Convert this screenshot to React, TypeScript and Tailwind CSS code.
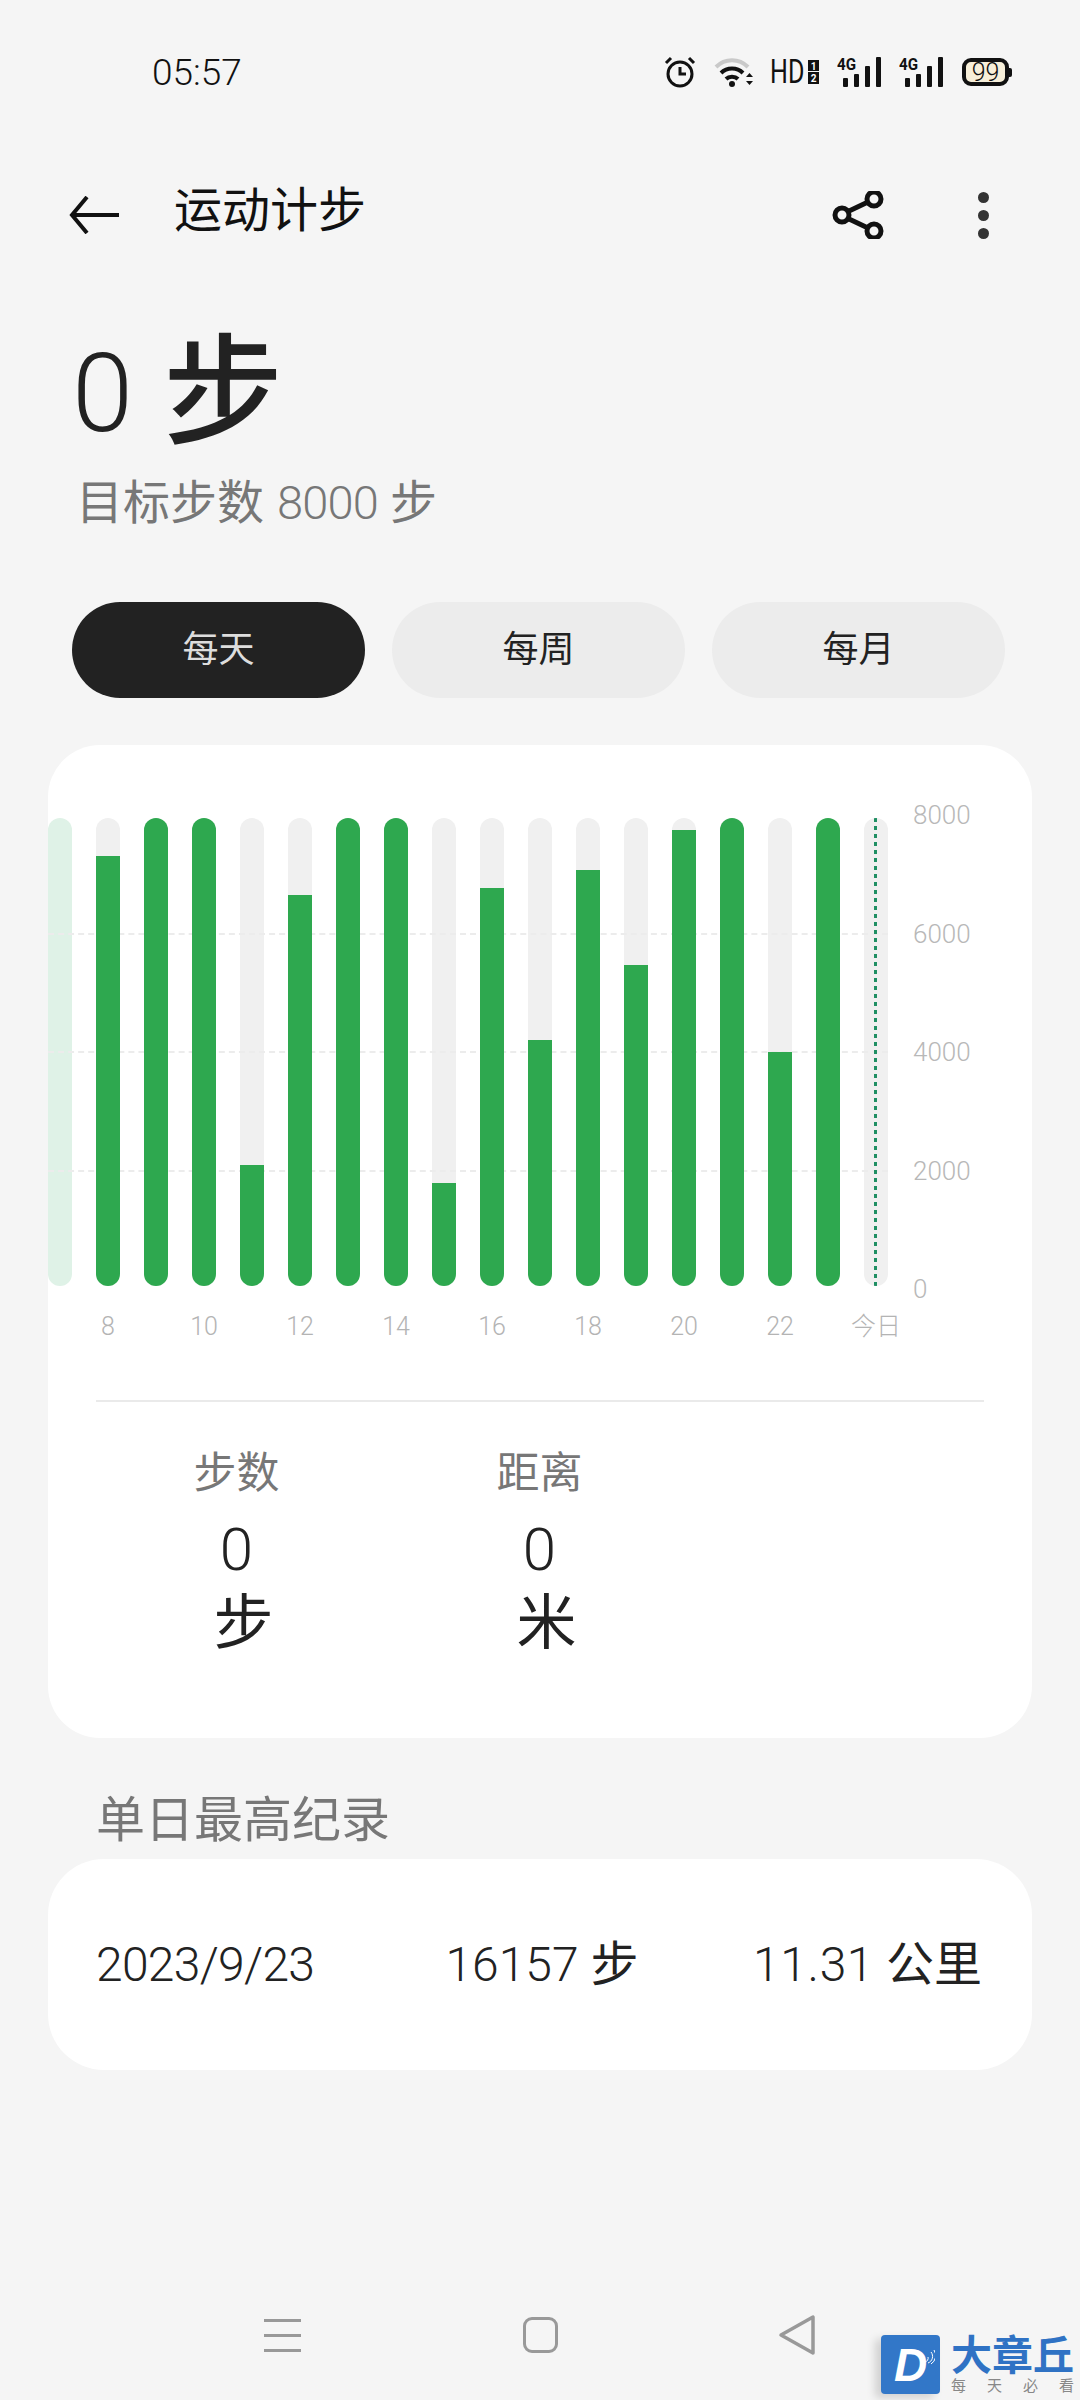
import React from 'react';

// top of the green fill in px from the track top, null = full bar
const bars: { fill: number | null; label?: string; light?: boolean; today?: boolean }[] = [
  { fill: null, light: true },
  { fill: 38, label: '8' },
  { fill: null },
  { fill: null, label: '10' },
  { fill: 347 },
  { fill: 77, label: '12' },
  { fill: null },
  { fill: null, label: '14' },
  { fill: 365 },
  { fill: 70, label: '16' },
  { fill: 222 },
  { fill: 52, label: '18' },
  { fill: 147 },
  { fill: 12, label: '20' },
  { fill: null },
  { fill: 234, label: '22' },
  { fill: null },
  { fill: 468, label: '今日', today: true },
];

const gridLines = ['top-[115px]', 'top-[233px]', 'top-[352px]'];
const yLabels = ['8000', '6000', '4000', '2000', '0'];

const SignalIcon = () => (
  <svg width="46" height="30" viewBox="0 0 46 30">
    <text transform="translate(0 13) scale(0.95 1)" fontSize="16" fontWeight="700" fontFamily="Roboto, sans-serif" fill="#111">4G</text>
    <rect x="6" y="21" width="5" height="9" rx="1" fill="#111" />
    <rect x="17" y="17" width="5" height="13" rx="1" fill="#111" />
    <rect x="28" y="9" width="5" height="21" rx="1" fill="#111" />
    <rect x="39" y="0" width="5" height="30" rx="1" fill="#111" />
  </svg>
);

const StatusBar = () => (
  <div className="h-[144px] flex items-center pl-[152px] pr-[68px] shrink-0">
    <span className="text-[37px] font-light text-[#111] leading-none">05:57</span>
    <div className="ml-auto flex items-center">
      <svg width="32" height="32" viewBox="0 0 32 32" fill="none" stroke="#111">
        <circle cx="16" cy="18" r="12" strokeWidth="3" />
        <path d="M16 11v7h6" strokeWidth="3" />
        <path d="M2 7l5-5M30 7l-5-5" strokeWidth="3" />
      </svg>
      <svg width="40" height="32" viewBox="0 0 40 32" fill="none" className="ml-[18px]">
        <path d="M2 11C11 2 25 2 34 11" stroke="#c9c9c9" strokeWidth="4" />
        <path d="M7 17C13 11 23 11 29 17" stroke="#111" strokeWidth="4" />
        <path d="M12 23C15 20 21 20 24 23" stroke="#111" strokeWidth="4" />
        <circle cx="18" cy="28" r="3" fill="#111" />
        <path d="M32 21l3.5-4 3.5 4zM32 25l3.5 4 3.5-4z" fill="#111" />
      </svg>
      <svg width="50" height="40" viewBox="0 -5 50 40" className="ml-[16px] -my-[5px]">
        <text transform="translate(0 26) scale(0.76 1)" fontSize="33" fontFamily="Roboto, sans-serif" fill="#111">HD</text>
        <rect x="38" y="3" width="11" height="11" fill="#111" />
        <rect x="38" y="15" width="11" height="12" fill="#111" />
        <text x="43.5" y="12.5" fontSize="10" fontWeight="700" textAnchor="middle" fontFamily="Roboto, sans-serif" fill="#fff">1</text>
        <text x="43.5" y="25" fontSize="10" fontWeight="700" textAnchor="middle" fontFamily="Roboto, sans-serif" fill="#fff">2</text>
      </svg>
      <div className="ml-[17px]"><SignalIcon /></div>
      <div className="ml-[16px]"><SignalIcon /></div>
      <div className="ml-[17px] flex items-center">
        <div className="w-[47px] h-[28px] rounded-[9px] border-[4px] border-[#111] bg-[#f7efd9] flex items-center justify-center text-[25px] font-light text-[#111] leading-none">
          99
        </div>
        <div className="w-[3px] h-[9px] rounded-r-[2px] bg-[#111]" />
      </div>
    </div>
  </div>
);

const Toolbar = () => (
  <div className="h-[142px] flex items-center pl-[69px] pr-[91px] shrink-0">
    <svg width="50" height="38" viewBox="0 0 50 38" fill="none" stroke="#111" strokeWidth="4">
      <path d="M50 19H3" />
      <path d="M18 1L3 19l15 18" />
    </svg>
    <span className="ml-[55px] mb-[8px] text-[48px] leading-none text-[#111]">运动计步</span>
    <svg width="52" height="48" viewBox="0 0 52 48" fill="none" stroke="#111" strokeWidth="5" className="ml-auto mr-[94px]">
      <circle cx="10" cy="24" r="7" />
      <circle cx="42" cy="8" r="7" />
      <circle cx="42" cy="40" r="7" />
      <path d="M16 20.5L36 11M16 27.5L36 37" />
    </svg>
    <div className="flex flex-col gap-[7px]">
      <div className="w-[11px] h-[11px] rounded-full bg-[#333]" />
      <div className="w-[11px] h-[11px] rounded-full bg-[#333]" />
      <div className="w-[11px] h-[11px] rounded-full bg-[#333]" />
    </div>
  </div>
);

const Chart = () => (
  <div className="flex items-start">
    <div className="relative flex gap-[24px] mt-[73px]">
      {gridLines.map((top) => (
        <div key={top} className={`absolute left-0 right-0 ${top} border-t-2 border-dashed border-[#ececec] z-[5]`} />
      ))}
      {bars.map((bar, i) => (
        <div key={i} className="w-[24px]">
          <div
            className={`relative h-[468px] rounded-full overflow-hidden flex flex-col justify-end ${
              bar.light ? 'bg-[#dff2e7]' : 'bg-[#f0f0f0]'
            }`}
          >
            {!bar.light && !bar.today && (
              <div className="relative z-10 bg-[#2ea84f]" style={{ height: 468 - (bar.fill ?? 0) }} />
            )}
            {bar.today && (
              <div className="absolute z-10 top-0 bottom-0 left-[10px] w-[3px] bg-[repeating-linear-gradient(to_bottom,#1f8f63_0,#1f8f63_4px,transparent_4px,transparent_8px)]" />
            )}
          </div>
          <div className="h-[26px] mt-[28px] flex justify-center">
            {bar.label && (
              <span className="whitespace-nowrap text-[25px] leading-[26px] font-light text-[#b4b4b4]">{bar.label}</span>
            )}
          </div>
        </div>
      ))}
    </div>
    <div className="ml-[25px] mt-[57px] h-[500px] flex flex-col justify-between">
      {yLabels.map((label) => (
        <span key={label} className="text-[26px] leading-[26px] font-light text-[#b8b8b8]">{label}</span>
      ))}
    </div>
  </div>
);

const Stat = ({ label, unit }: { label: string; unit: string }) => (
  <div className="w-[303px] flex flex-col items-center">
    <span className="text-[43px] leading-[46px] text-[#777]">{label}</span>
    <span className="mt-[24px] text-[60px] leading-[60px] font-light text-[#222]">0</span>
    <span className="mt-[14px] pl-[14px] text-[60px] leading-[60px] text-[#222]">{unit}</span>
  </div>
);

const NavBar = () => (
  <div className="mt-auto mb-[44px] h-[42px] flex items-center pl-[264px] shrink-0">
    <div className="w-[37px] flex flex-col gap-[12px]">
      <div className="h-[3px] bg-[#999]" />
      <div className="h-[3px] bg-[#999]" />
      <div className="h-[3px] bg-[#999]" />
    </div>
    <div className="ml-[222px] w-[35px] h-[36px] rounded-[9px] border-[3px] border-[#999]" />
    <svg width="38" height="42" viewBox="0 0 38 42" fill="none" stroke="#999" strokeWidth="3.5" strokeLinejoin="round" className="ml-[220px]">
      <path d="M35 3v36L3 21z" />
    </svg>
  </div>
);

const Watermark = () => (
  <div className="absolute left-[881px] top-[2335px] flex">
    <div className="relative w-[59px] h-[59px] rounded-[4px] bg-[#3277c8] shadow-[-6px_4px_8px_rgba(0,0,0,0.15)] flex items-center justify-center">
      <span className="text-[46px] leading-none font-bold italic text-white [font-family:'Liberation_Sans',sans-serif]">D</span>
      <svg width="12" height="16" viewBox="0 0 12 16" fill="none" stroke="#fff" strokeWidth="1" className="absolute right-[5px] top-[14px]">
        <path d="M2 13a4 4 0 0 0 3-5M5 14a7 7 0 0 0 3-11M8 15A10 10 0 0 0 11 1" />
      </svg>
    </div>
    <div className="ml-[11px] flex flex-col">
      <span className="text-[41px] leading-[38px] font-bold text-[#2f72c4] whitespace-nowrap mt-[2px]">大章丘</span>
      <div className="mt-[3px] flex gap-[21px] text-[15px] leading-[16px] text-[#888]">
        <span>每</span>
        <span>天</span>
        <span>必</span>
        <span>看</span>
      </div>
    </div>
  </div>
);

export default function App() {
  return (
    <div className="relative w-[1080px] h-[2400px] overflow-hidden flex flex-col bg-[#f5f5f5] [font-family:Roboto,'Noto_Sans_CJK_SC',sans-serif]">
      <StatusBar />
      <Toolbar />

      {/* Today's total */}
      <div className="pl-[72px] h-[126px] mt-[45px] flex items-center text-[#222] leading-none shrink-0">
        <span className="text-[110px] font-light">0</span>
        <span className="ml-[30px] text-[120px] font-medium">步</span>
      </div>
      <div className="pl-[76px] mt-[22px] h-[46px] flex items-center text-[47px] leading-none text-[#777] shrink-0">
        目标步数<span className="ml-[13px] font-light tracking-[-0.8px]">8000</span><span className="ml-[12px]">步</span>
      </div>

      {/* Range tabs */}
      <div className="mt-[77px] pl-[72px] pr-[75px] grid grid-cols-3 gap-[27px] shrink-0">
        <div className="h-[96px] rounded-full bg-[#222] text-[#ddd] text-[36px] flex items-center justify-center">每天</div>
        <div className="h-[96px] rounded-full bg-[#ececec] text-[#222] text-[36px] flex items-center justify-center">每周</div>
        <div className="h-[96px] rounded-full bg-[#ececec] text-[#222] text-[36px] flex items-center justify-center">每月</div>
      </div>

      {/* Chart card */}
      <div className="mt-[47px] mx-[48px] h-[993px] rounded-[52px] bg-white shrink-0 overflow-hidden">
        <Chart />
        <div className="mx-[48px] mt-[60px] h-[2px] bg-[#eaeaea]" />
        <div className="mt-[48px] pl-[37px] flex">
          <Stat label="步数" unit="步" />
          <Stat label="距离" unit="米" />
        </div>
      </div>

      {/* Daily record */}
      <div className="mt-[58px] pl-[96px] h-[48px] flex items-center text-[49px] leading-none text-[#777] shrink-0">单日最高纪录</div>
      <div className="mt-[15px] mx-[48px] h-[211px] rounded-[56px] bg-white pl-[48px] pr-[50px] flex items-center text-[48px] leading-none text-[#222] shrink-0">
        <span className="w-[352px] font-light tracking-[-0.7px]">2023/9/23</span>
        <span className="w-[310px]"><span className="font-light">16157</span> 步</span>
        <span className="ml-auto whitespace-nowrap"><span className="font-light tracking-[0.6px]">11.31</span> 公里</span>
      </div>

      <NavBar />
      <Watermark />
    </div>
  );
}
